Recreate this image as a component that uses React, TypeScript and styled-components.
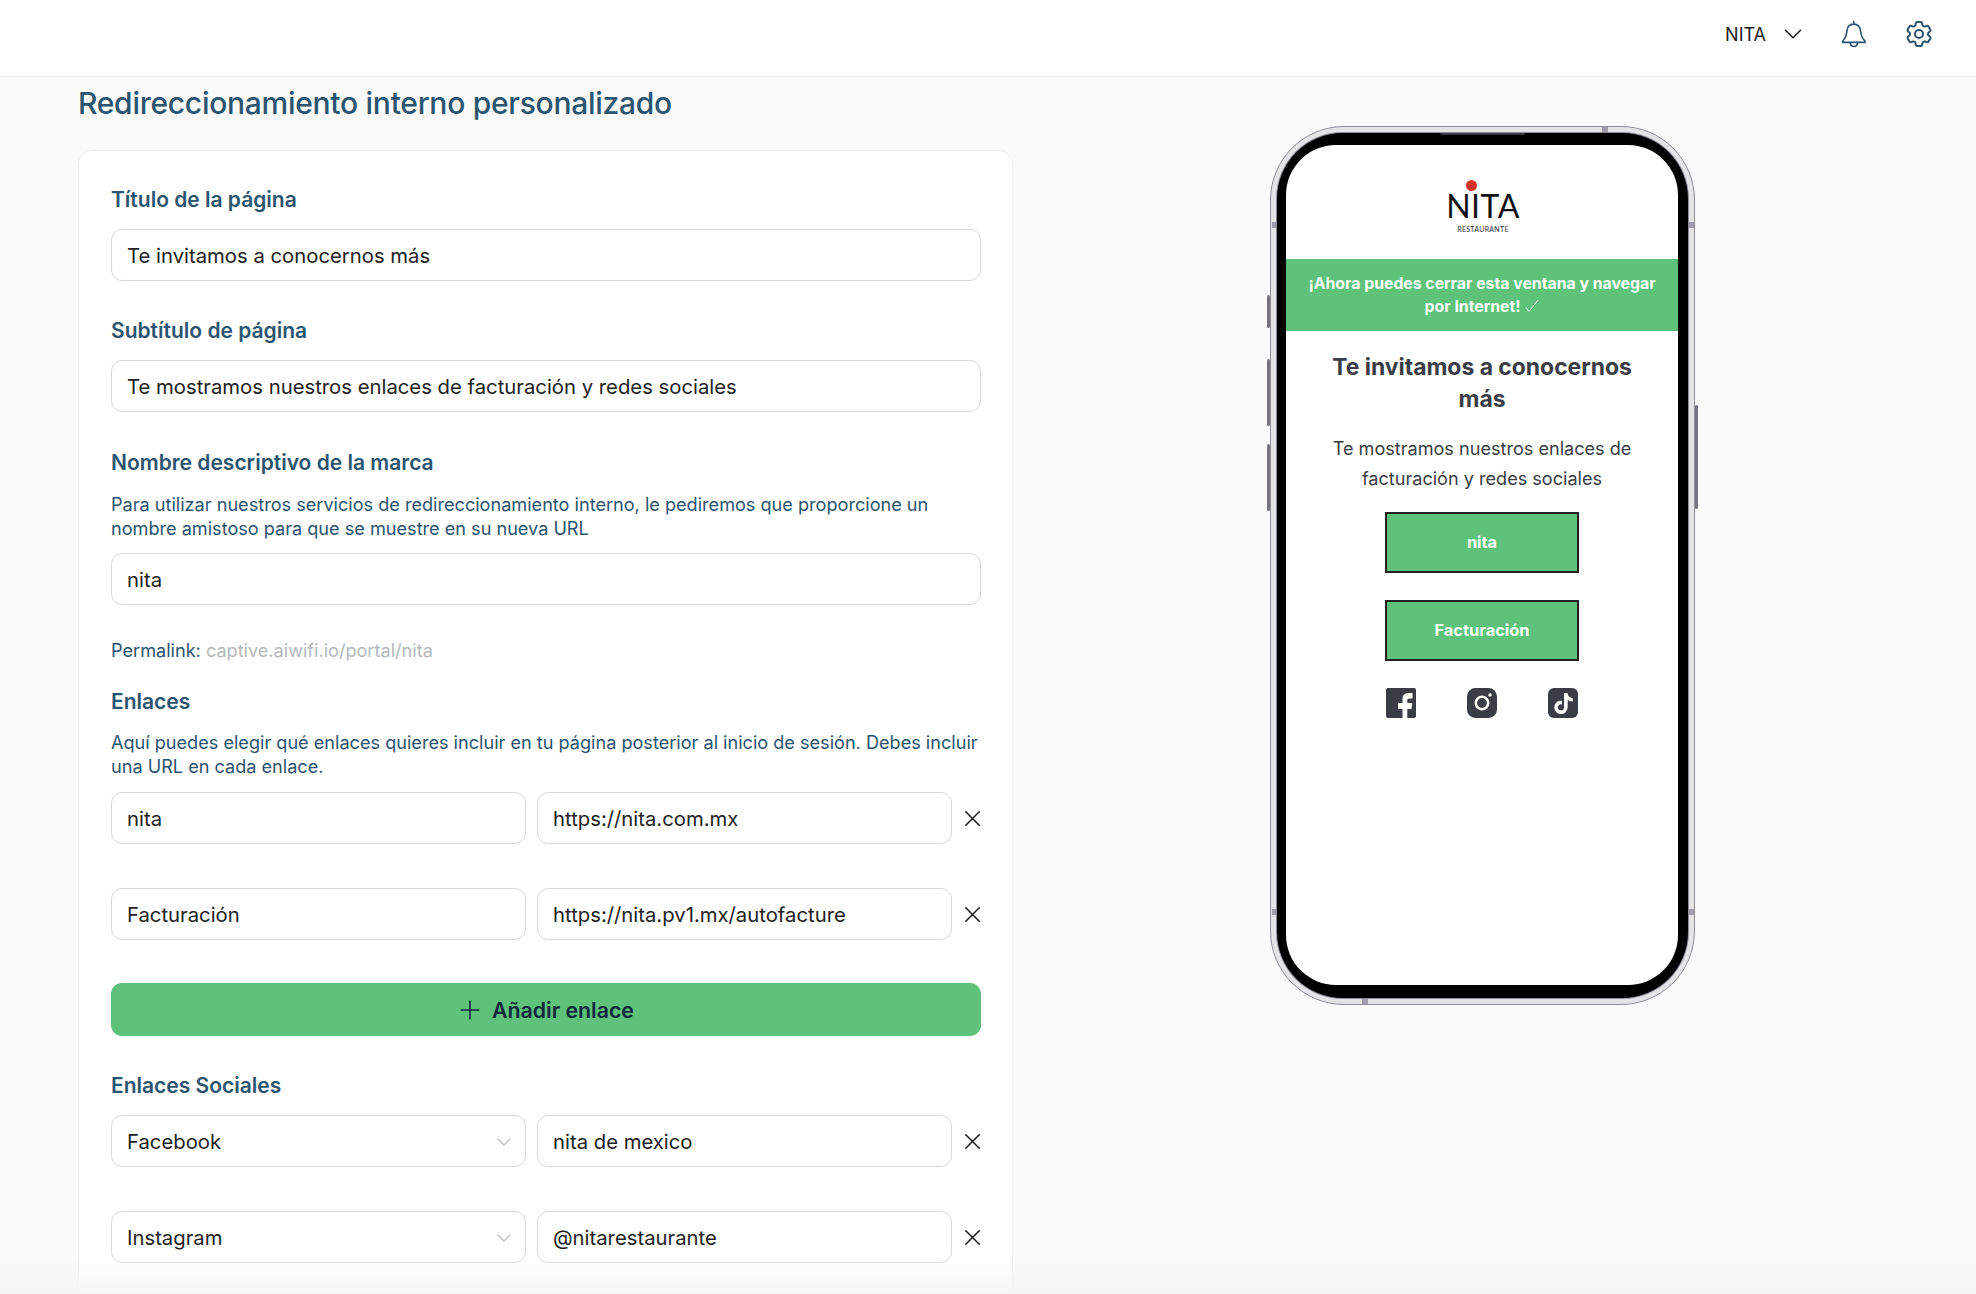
import React from "react";
import styled, { createGlobalStyle } from "styled-components";
import { FaTiktok } from "react-icons/fa";
import { HiOutlineCog6Tooth } from "react-icons/hi2";
import { ChevronDown, Plus, X } from "lucide-react";

const GlobalStyle = createGlobalStyle`
  html, body {
    margin: 0;
    height: 100%;
    overflow: hidden;
    background: #fafafa;
    font-family: Inter, "Liberation Sans", sans-serif;
  }
  * { box-sizing: border-box; }
`;

const Header = styled.header`
  height: 77px;
  background: #fff;
  border-bottom: 1px solid #efefef;
  display: flex;
  align-items: center;
  justify-content: flex-end;
  padding: 0 41px 9px 0;
`;

const UserName = styled.span`
  padding-top: 1px;
  font-size: 18px;
  color: #222;
`;

const UserMenu = styled.div`
  display: flex;
  align-items: center;
  gap: 12px;
  margin-right: 33px;
`;

const HeaderIcon = styled.span`
  display: flex;
  color: #2a5470;
  & + & { margin-left: 36px; }
`;

const Main = styled.main`
  display: grid;
  grid-template-columns: 1013px 1fr;
`;

const LeftColumn = styled.section`
  padding-left: 78px;
`;

const PageTitle = styled.h1`
  margin: 8px 0 0;
  font-size: 30px;
  line-height: 36px;
  font-weight: 500;
  letter-spacing: -0.27px;
  color: #2a5470;
`;

const Card = styled.div`
  margin-top: 29px;
  background: #fff;
  border: 1px solid #f1f1f1;
  border-radius: 14px;
  padding: 36px 31px 60px 32px;
`;

const Label = styled.h2<{ $top?: number; $bottom?: number }>`
  margin: ${(p) => p.$top ?? 0}px 0 ${(p) => p.$bottom ?? 17}px;
  padding-top: 1px;
  font-size: 21px;
  line-height: 24px;
  font-weight: 600;
  color: #2a5470;
`;

const Help = styled.p<{ $bottom: number }>`
  margin: 0 0 ${(p) => p.$bottom}px;
  font-size: 18.12px;
  line-height: 24px;
  color: #2a5470;
`;

const TextInput = styled.input`
  display: block;
  width: 100%;
  height: 52px;
  padding: 1px 15px 0;
  background: #fff;
  border: 1px solid #d9d9d9;
  border-radius: 11px;
  outline: none;
  font: 400 20.3px Inter, "Liberation Sans", sans-serif;
  color: #222;
`;

const SelectBox = styled.div`
  height: 52px;
  padding: 1px 9px 0 15px;
  background: #fff;
  border: 1px solid #d9d9d9;
  border-radius: 11px;
  display: flex;
  align-items: center;
  justify-content: space-between;
  font-size: 20.3px;
  color: #222;
  svg { color: #b5b5b5; }
`;

const Permalink = styled.p`
  margin: 33px 0 0;
  font-size: 18.12px;
  line-height: 24px;
  color: #2a5470;
`;

const PermalinkUrl = styled.span`
  color: #b4b8bc;
`;

const LinkRow = styled.div<{ $top: number }>`
  margin-top: ${(p) => p.$top}px;
  display: grid;
  grid-template-columns: 415px 415px 18px;
  column-gap: 11px;
  align-items: center;
`;

const RemoveButton = styled.span`
  display: flex;
  justify-content: center;
  padding-top: 1px;
  color: #222;
  svg { flex: none; }
`;

const AddButton = styled.button`
  margin-top: 43px;
  width: 100%;
  height: 53px;
  padding: 0 3px 0 0;
  border: none;
  border-radius: 11px;
  background: #5fc27b;
  display: flex;
  align-items: center;
  justify-content: center;
  gap: 7px;
  font: 600 21.3px Inter, "Liberation Sans", sans-serif;
  color: #12293d;
`;

const RightColumn = styled.aside`
  display: flex;
  justify-content: center;
  padding: 49px 24px 0 0;
`;

const PhoneFrame = styled.div`
  position: relative;
  width: 425px;
  height: 879px;
  padding: 6px;
  background: #e4e4e6;
  border: 1px solid #8f8b99;
  border-radius: 74px;
`;

const Bezel = styled.div`
  position: relative;
  height: 100%;
  padding: 12px 10px 13px 9px;
  background: #000;
  border-radius: 66px;
  box-shadow: 0 0 0 1px #8f8b99;
`;

const Speaker = styled.span`
  position: absolute;
  top: 0;
  left: 163px;
  width: 85px;
  height: 2px;
  background: #3a3843;
  border-radius: 0 0 4px 4px;
`;

const SideButton = styled.span<{ $side: "left" | "right"; $y: number; $h: number }>`
  position: absolute;
  ${(p) => p.$side}: -4px;
  top: ${(p) => p.$y}px;
  width: 3px;
  height: ${(p) => p.$h}px;
  background: #77737f;
  border-radius: 2px;
`;

const AntennaBand = styled.span<{ $x: number; $y: number; $vertical?: boolean }>`
  position: absolute;
  left: ${(p) => p.$x}px;
  top: ${(p) => p.$y}px;
  width: ${(p) => (p.$vertical ? 5 : 6)}px;
  height: ${(p) => (p.$vertical ? 6 : 5)}px;
  background: #a09cab;
`;

const Screen = styled.div`
  height: 100%;
  background: #fff;
  border-radius: 50px;
  overflow: hidden;
  display: flex;
  flex-direction: column;
  align-items: center;
  color: #3a3d45;
`;

const Logo = styled.div`
  height: 114px;
  padding-top: 47px;
  display: flex;
  flex-direction: column;
  align-items: center;
  margin-left: 2px;
`;

const LogoWord = styled.div`
  position: relative;
  font: 400 32px/27px Lato, "Open Sans", sans-serif;
  letter-spacing: 0.5px;
  color: #111;
`;

const LogoDot = styled.span`
  position: absolute;
  top: -12px;
  left: 20px;
  width: 11px;
  height: 11px;
  border-radius: 50%;
  background: #d8322a;
`;

const LogoSub = styled.div`
  margin-top: 6px;
  font: 400 7px/9px Lato, "Open Sans", sans-serif;
  letter-spacing: 0.3px;
  color: #333;
`;

const Banner = styled.div`
  width: 100%;
  height: 72px;
  padding: 13px 14px 0;
  background: #5fc27b;
  text-align: center;
  font-size: 15.8px;
  line-height: 23px;
  font-weight: 700;
  color: #fff;
  svg { vertical-align: -1px; margin-left: 1px; }
`;

const ScreenTitle = styled.h3`
  margin: 20px 0 0;
  width: 340px;
  text-align: center;
  font-size: 22.9px;
  line-height: 32px;
  font-weight: 700;
`;

const ScreenText = styled.p`
  margin: 18px 0 0;
  width: 340px;
  text-align: center;
  font-size: 18.1px;
  line-height: 30px;
`;

const ScreenLink = styled.div<{ $top: number }>`
  margin-top: ${(p) => p.$top}px;
  width: 194px;
  height: 61px;
  flex: none;
  padding-bottom: 2px;
  background: #5fc27b;
  border: 2px solid #222;
  display: flex;
  align-items: center;
  justify-content: center;
  font-size: 16.4px;
  font-weight: 700;
  color: #fff;
`;

const SocialRow = styled.div`
  margin-top: 27px;
  width: 192px;
  display: flex;
  justify-content: space-between;
  color: #3a3d45;
`;

const TikTokSquare = styled.span`
  width: 30px;
  height: 30px;
  background: #3a3d45;
  border-radius: 6px;
  display: flex;
  align-items: center;
  justify-content: center;
  color: #fff;
`;

const BottomFade = styled.div`
  position: fixed;
  left: 0;
  right: 0;
  bottom: 0;
  height: 36px;
  background: linear-gradient(to bottom, rgba(244, 244, 244, 0), rgba(244, 244, 244, 0.9));
  pointer-events: none;
`;

const BellIcon = () => (
  <svg width="26" height="28" viewBox="0 0 26 28" fill="none" stroke="currentColor" strokeWidth="1.6" strokeLinejoin="round" strokeLinecap="round">
    <path d="M12.8 1.5v2.6M12.8 4.1c-4.2 0-6.6 3-6.9 6.8-.3 3.9-.8 6.4-3.4 9.1-.7.8-.9 1.6-.9 2.4h22.6c0-.9-.4-1.7-1-2.3-2.4-2.3-3-4.6-3.5-8.6-.5-4.4-2.7-7.4-6.9-7.4z" />
    <path d="M9.3 22.6c0 2.4 1.5 3.9 3.6 3.9s3.6-1.5 3.6-3.9" />
  </svg>
);

const FacebookIcon = () => (
  <svg width="30" height="30" viewBox="0 0 30 30">
    <rect width="30" height="30" rx="2" fill="#3a3d45" />
    <path
      fill="#fff"
      d="M16.5 30v-9H12v-6h4.5v-4c0-4 2.6-6 6-6h4v5.5h-3c-1.6 0-2.2.8-2.2 2.2V15h5l-.8 6h-4.2v9z"
    />
  </svg>
);

const InstagramIcon = () => (
  <svg width="30" height="30" viewBox="0 0 30 30">
    <rect width="30" height="30" rx="8.5" fill="#3a3d45" />
    <circle cx="15" cy="15" r="6.2" fill="none" stroke="#fff" strokeWidth="2.6" />
    <circle cx="23" cy="7" r="1.7" fill="#fff" />
  </svg>
);

const ThinCheck = () => (
  <svg width="14" height="14" viewBox="0 0 14 14" fill="none" stroke="#fff" strokeWidth="0.9">
    <path d="M1 8.5l3 4L13 1" />
  </svg>
);

const linkRows = [
  { name: "nita", url: "https://nita.com.mx", top: 0 },
  { name: "Facturación", url: "https://nita.pv1.mx/autofacture", top: 44 },
];

const socialRows = [
  { network: "Facebook", handle: "nita de mexico", top: 0 },
  { network: "Instagram", handle: "@nitarestaurante", top: 44 },
];

export default function App() {
  return (
    <>
      <GlobalStyle />
      <Header>
        <UserMenu>
          <UserName>NITA</UserName>
          <ChevronDown size={30} color="#222" strokeWidth={1.3} />
        </UserMenu>
        <HeaderIcon>
          <BellIcon />
        </HeaderIcon>
        <HeaderIcon>
          <HiOutlineCog6Tooth size={32} />
        </HeaderIcon>
      </Header>
      <Main>
        <LeftColumn>
          <PageTitle>Redireccionamiento interno personalizado</PageTitle>
          <Card>
            <Label>Título de la página</Label>
            <TextInput readOnly value="Te invitamos a conocernos más" />
            <Label $top={37}>Subtítulo de página</Label>
            <TextInput readOnly value="Te mostramos nuestros enlaces de facturación y redes sociales" />
            <Label $top={38}>Nombre descriptivo de la marca</Label>
            <Help $bottom={13}>
              Para utilizar nuestros servicios de redireccionamiento interno, le pediremos que proporcione un nombre
              amistoso para que se muestre en su nueva URL
            </Help>
            <TextInput readOnly value="nita" />
            <Permalink>
              Permalink: <PermalinkUrl>captive.aiwifi.io/portal/nita</PermalinkUrl>
            </Permalink>
            <Label $top={27} $bottom={16}>Enlaces</Label>
            <Help $bottom={14}>
              Aquí puedes elegir qué enlaces quieres incluir en tu página posterior al inicio de sesión. Debes incluir
              una URL en cada enlace.
            </Help>
            {linkRows.map((row) => (
              <LinkRow key={row.url} $top={row.top}>
                <TextInput readOnly value={row.name} />
                <TextInput readOnly value={row.url} />
                <RemoveButton>
                  <X size={27} strokeWidth={1.4} />
                </RemoveButton>
              </LinkRow>
            ))}
            <AddButton>
              <Plus size={30} strokeWidth={1.3} />
              Añadir enlace
            </AddButton>
            <Label $top={37}>Enlaces Sociales</Label>
            {socialRows.map((row) => (
              <LinkRow key={row.network} $top={row.top}>
                <SelectBox>
                  {row.network}
                  <ChevronDown size={24} strokeWidth={1.1} />
                </SelectBox>
                <TextInput readOnly value={row.handle} />
                <RemoveButton>
                  <X size={27} strokeWidth={1.4} />
                </RemoveButton>
              </LinkRow>
            ))}
          </Card>
        </LeftColumn>
        <RightColumn>
          <PhoneFrame>
            <SideButton $side="left" $y={168} $h={33} />
            <SideButton $side="left" $y={232} $h={67} />
            <SideButton $side="left" $y={317} $h={67} />
            <SideButton $side="right" $y={278} $h={104} />
            <AntennaBand $x={331} $y={0} />
            <AntennaBand $x={91} $y={872} />
            <AntennaBand $x={1} $y={95} $vertical />
            <AntennaBand $x={418} $y={95} $vertical />
            <AntennaBand $x={1} $y={782} $vertical />
            <AntennaBand $x={418} $y={782} $vertical />
            <Bezel>
              <Speaker />
              <Screen>
                <Logo>
                  <LogoWord>
                    <LogoDot />
                    NITA
                  </LogoWord>
                  <LogoSub>RESTAURANTE</LogoSub>
                </Logo>
                <Banner>
                  ¡Ahora puedes cerrar esta ventana y navegar por Internet! <ThinCheck />
                </Banner>
                <ScreenTitle>Te invitamos a conocernos más</ScreenTitle>
                <ScreenText>Te mostramos nuestros enlaces de facturación y redes sociales</ScreenText>
                <ScreenLink $top={19}>nita</ScreenLink>
                <ScreenLink $top={27}>Facturación</ScreenLink>
                <SocialRow>
                  <FacebookIcon />
                  <InstagramIcon />
                  <TikTokSquare>
                    <FaTiktok size={21} />
                  </TikTokSquare>
                </SocialRow>
              </Screen>
            </Bezel>
          </PhoneFrame>
        </RightColumn>
      </Main>
      <BottomFade />
    </>
  );
}
